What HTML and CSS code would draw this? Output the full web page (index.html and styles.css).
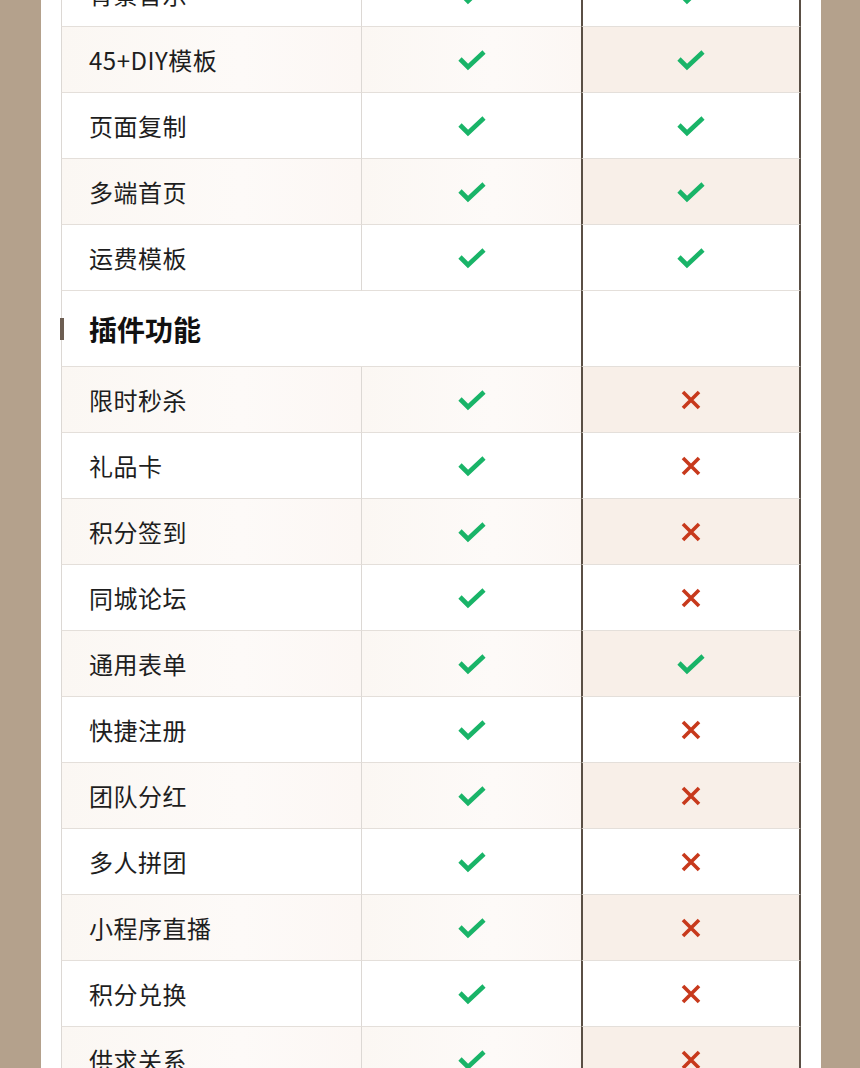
FILE: index.html
```html
<!DOCTYPE html>
<html lang="zh-CN">
<head>
<meta charset="utf-8">
<title>功能对比</title>
<link rel="stylesheet" href="styles.css">
</head>
<body>
<div class="card">
  <div class="table">
    <div class="row"><div class="cell name">背景音乐</div><div class="cell mid"><svg class="ok" viewBox="0 0 28 22"><polyline points="2,10 10,18 26,3"/></svg></div><div class="cell pro"><svg class="ok" viewBox="0 0 28 22"><polyline points="2,10 10,18 26,3"/></svg></div></div>
    <div class="row shade"><div class="cell name">45+DIY模板</div><div class="cell mid"><svg class="ok" viewBox="0 0 28 22"><polyline points="2,10 10,18 26,3"/></svg></div><div class="cell pro"><svg class="ok" viewBox="0 0 28 22"><polyline points="2,10 10,18 26,3"/></svg></div></div>
    <div class="row"><div class="cell name">页面复制</div><div class="cell mid"><svg class="ok" viewBox="0 0 28 22"><polyline points="2,10 10,18 26,3"/></svg></div><div class="cell pro"><svg class="ok" viewBox="0 0 28 22"><polyline points="2,10 10,18 26,3"/></svg></div></div>
    <div class="row shade"><div class="cell name">多端首页</div><div class="cell mid"><svg class="ok" viewBox="0 0 28 22"><polyline points="2,10 10,18 26,3"/></svg></div><div class="cell pro"><svg class="ok" viewBox="0 0 28 22"><polyline points="2,10 10,18 26,3"/></svg></div></div>
    <div class="row"><div class="cell name">运费模板</div><div class="cell mid"><svg class="ok" viewBox="0 0 28 22"><polyline points="2,10 10,18 26,3"/></svg></div><div class="cell pro"><svg class="ok" viewBox="0 0 28 22"><polyline points="2,10 10,18 26,3"/></svg></div></div>

    <div class="row section"><div class="cell title"><span class="marker"></span>插件功能</div><div class="cell pro"></div></div>

    <div class="row shade"><div class="cell name">限时秒杀</div><div class="cell mid"><svg class="ok" viewBox="0 0 28 22"><polyline points="2,10 10,18 26,3"/></svg></div><div class="cell pro"><svg class="no" viewBox="0 0 20 20"><path d="M2 2L18 18M18 2L2 18"/></svg></div></div>
    <div class="row"><div class="cell name">礼品卡</div><div class="cell mid"><svg class="ok" viewBox="0 0 28 22"><polyline points="2,10 10,18 26,3"/></svg></div><div class="cell pro"><svg class="no" viewBox="0 0 20 20"><path d="M2 2L18 18M18 2L2 18"/></svg></div></div>
    <div class="row shade"><div class="cell name">积分签到</div><div class="cell mid"><svg class="ok" viewBox="0 0 28 22"><polyline points="2,10 10,18 26,3"/></svg></div><div class="cell pro"><svg class="no" viewBox="0 0 20 20"><path d="M2 2L18 18M18 2L2 18"/></svg></div></div>
    <div class="row"><div class="cell name">同城论坛</div><div class="cell mid"><svg class="ok" viewBox="0 0 28 22"><polyline points="2,10 10,18 26,3"/></svg></div><div class="cell pro"><svg class="no" viewBox="0 0 20 20"><path d="M2 2L18 18M18 2L2 18"/></svg></div></div>
    <div class="row shade"><div class="cell name">通用表单</div><div class="cell mid"><svg class="ok" viewBox="0 0 28 22"><polyline points="2,10 10,18 26,3"/></svg></div><div class="cell pro"><svg class="ok" viewBox="0 0 28 22"><polyline points="2,10 10,18 26,3"/></svg></div></div>
    <div class="row"><div class="cell name">快捷注册</div><div class="cell mid"><svg class="ok" viewBox="0 0 28 22"><polyline points="2,10 10,18 26,3"/></svg></div><div class="cell pro"><svg class="no" viewBox="0 0 20 20"><path d="M2 2L18 18M18 2L2 18"/></svg></div></div>
    <div class="row shade"><div class="cell name">团队分红</div><div class="cell mid"><svg class="ok" viewBox="0 0 28 22"><polyline points="2,10 10,18 26,3"/></svg></div><div class="cell pro"><svg class="no" viewBox="0 0 20 20"><path d="M2 2L18 18M18 2L2 18"/></svg></div></div>
    <div class="row"><div class="cell name">多人拼团</div><div class="cell mid"><svg class="ok" viewBox="0 0 28 22"><polyline points="2,10 10,18 26,3"/></svg></div><div class="cell pro"><svg class="no" viewBox="0 0 20 20"><path d="M2 2L18 18M18 2L2 18"/></svg></div></div>
    <div class="row shade"><div class="cell name">小程序直播</div><div class="cell mid"><svg class="ok" viewBox="0 0 28 22"><polyline points="2,10 10,18 26,3"/></svg></div><div class="cell pro"><svg class="no" viewBox="0 0 20 20"><path d="M2 2L18 18M18 2L2 18"/></svg></div></div>
    <div class="row"><div class="cell name">积分兑换</div><div class="cell mid"><svg class="ok" viewBox="0 0 28 22"><polyline points="2,10 10,18 26,3"/></svg></div><div class="cell pro"><svg class="no" viewBox="0 0 20 20"><path d="M2 2L18 18M18 2L2 18"/></svg></div></div>
    <div class="row shade"><div class="cell name">供求关系</div><div class="cell mid"><svg class="ok" viewBox="0 0 28 22"><polyline points="2,10 10,18 26,3"/></svg></div><div class="cell pro"><svg class="no" viewBox="0 0 20 20"><path d="M2 2L18 18M18 2L2 18"/></svg></div></div>
  </div>
</div>
</body>
</html>
```

FILE: styles.css
```css
html, body {
  margin: 0;
  padding: 0;
  height: 100%;
  overflow: hidden;
  background: #b4a18c;
}

body {
  font-family: "Noto Sans CJK SC", "Noto Sans", sans-serif;
  color: #1e1e1e;
}

.card {
  width: 780px;
  margin-left: 41px;
  min-height: 1200px;
  background: #ffffff;
  padding: 0 20px;
  box-sizing: border-box;
}

.table {
  margin-top: -39px;
  width: 740px;
}

.row {
  display: grid;
  grid-template-columns: 301px 219px 220px;
  height: 66px;
}

.row.section {
  grid-template-columns: 520px 220px;
  height: 76px;
}

.cell {
  box-sizing: border-box;
  border-bottom: 1px solid #e4dfda;
  display: flex;
  align-items: center;
}

.name {
  border-left: 1px solid #dcd8d4;
  border-right: 1px solid #dcd8d4;
  padding-left: 27px;
  padding-bottom: 1px;
  font-size: 24px;
  letter-spacing: 0.5px;
}

.mid {
  justify-content: center;
}

.pro {
  justify-content: center;
  border-left: 2px solid #5a4f45;
  border-right: 2px solid #5a4f45;
}

.shade .name,
.shade .mid {
  background: linear-gradient(90deg, #fbf7f3 0%, #fdfaf8 60%, #fcf7f4 100%);
}

.shade .pro {
  background: #f8efe8;
}

.title {
  position: relative;
  border-left: 1px solid #dcd8d4;
  padding-left: 27px;
  font-size: 28px;
  font-weight: 700;
  color: #111;
}

.marker {
  position: absolute;
  left: -2px;
  top: 27px;
  width: 4px;
  height: 22px;
  background: #6d5e52;
}

.ok {
  width: 28px;
  height: 22px;
  fill: none;
  stroke: #19b468;
  stroke-width: 4.6;
  stroke-linecap: butt;
  stroke-linejoin: miter;
}

.no {
  width: 20px;
  height: 20px;
  fill: none;
  stroke: #c7391c;
  stroke-width: 3.6;
  stroke-linecap: butt;
}
```
